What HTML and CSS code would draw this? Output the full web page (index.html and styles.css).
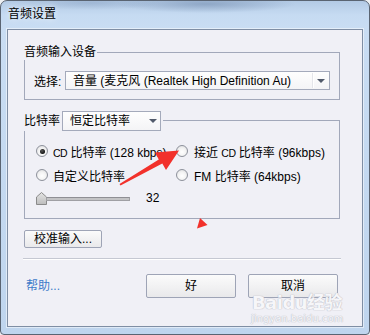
FILE: index.html
```html
<!DOCTYPE html>
<html lang="zh-CN">
<head>
<meta charset="utf-8">
<title>音频设置</title>
<link rel="stylesheet" href="styles.css">
</head>
<body>
<div class="window">
  <div class="titlebar">音频设置</div>
  <div class="client">
    <div class="group g1">
      <div class="group-title">音频输入设备</div>
      <div class="select-row">
        <span class="lbl">选择:</span>
        <div class="combo wide">
          <span class="combo-text">音量 (麦克风 (Realtek High Definition Au)</span>
          <span class="combo-sep"></span>
          <span class="arrow"></span>
        </div>
      </div>
    </div>

    <div class="group g2">
      <div class="group-title g2-title">
        <span class="g2-label">比特率</span>
        <div class="combo small">
          <span class="combo-text">恒定比特率</span>
          <span class="arrow"></span>
        </div>
      </div>
      <div class="radios">
        <div class="radio"><i class="dot checked"></i><span><span class="cd">CD</span> 比特率 (128 kbps)</span></div>
        <div class="radio"><i class="dot"></i><span>接近 <span class="cd">CD</span> 比特率 (96kbps)</span></div>
        <div class="radio"><i class="dot"></i><span>自定义比特率</span></div>
        <div class="radio"><i class="dot"></i><span>FM 比特率 (64kbps)</span></div>
      </div>
      <div class="slider-row">
        <div class="slider">
          <svg class="thumb" width="11" height="13" viewBox="0 0 11 13">
            <defs>
              <linearGradient id="tg" x1="0" y1="0" x2="0" y2="1">
                <stop offset="0" stop-color="#e4e4e4"/>
                <stop offset="1" stop-color="#bdbdbd"/>
              </linearGradient>
            </defs>
            <polygon points="0.5,12.5 0.5,5 5.5,0.5 10.5,5 10.5,12.5" fill="url(#tg)" stroke="#8a8a8a"/>
          </svg>
          <div class="track"></div>
        </div>
        <span class="val">32</span>
      </div>
    </div>

    <button class="btn calib">校准输入...</button>
    <div class="separator"></div>
    <div class="footer">
      <a class="help">帮助...</a>
      <div class="actions">
        <button class="btn big">好</button>
        <button class="btn big">取消</button>
      </div>
    </div>
  </div>

  <svg class="annot" width="370" height="335" viewBox="0 0 370 335">
    <polygon points="119.5,184 158.8,159.5 155,152.5 179,150.5 166,170 162.3,163.6 120.5,185.6" fill="#f2312b"/>
    <polygon points="200,218 197,228.5 207.5,225" fill="#f2312b"/>
  </svg>
  <div class="watermark">
    <div class="wm-big">Baidu经验</div>
    <div class="wm-small">jingyan.baidu.com</div>
  </div>
</div>
</body>
</html>
```
FILE: styles.css
```css
* { box-sizing: border-box; }
html, body { margin: 0; padding: 0; }
body {
  width: 370px;
  height: 335px;
  overflow: hidden;
  background: #eef0f3;
  font-family: "Liberation Sans", "Noto Sans CJK SC", sans-serif;
  font-size: 12px;
  color: #000;
}
.window {
  position: relative;
  width: 370px;
  height: 335px;
  border: 1px solid #5a6472;
  border-radius: 7px 7px 4px 4px;
  padding: 0 6px 7px 6px;
  display: flex;
  flex-direction: column;
  background:
    radial-gradient(ellipse 90px 9px at 205px 3px, rgba(110,135,170,0.55), rgba(110,135,170,0) 100%),
    radial-gradient(ellipse 70px 7px at 90px 2px, rgba(120,145,180,0.35), rgba(120,145,180,0) 100%),
    linear-gradient(to bottom, #b3cae5 0, #c6dbf2 14px, #c9ddf3 28px, #bfd5ee 100%);
}
.titlebar {
  height: 28px;
  line-height: 27px;
  padding-left: 1px;
  font-size: 12px;
  color: #000;
  text-shadow: 0 0 6px rgba(255,255,255,0.9);
}
.client {
  height: 298px;
  border: 1px solid #7f8ea4;
  box-shadow: 0 0 0 1px rgba(255,255,255,0.5);
  background: #f0f0f6;
  padding: 22px 22px 0 16px;
  display: flex;
  flex-direction: column;
  align-items: flex-start;
}
.group {
  width: 316px;
  border: 1px solid #a2a8ba;
  display: flex;
  flex-direction: column;
  align-items: flex-start;
}
.group-title {
  background: #f0f0f6;
  line-height: 16px;
  margin: -9px 0 0 -1px;
  padding-right: 1px;
}
.g1 { padding-bottom: 9px; }
.select-row {
  margin-top: 11px;
  padding-left: 9px;
  display: flex;
  align-items: center;
}
.lbl { width: 31px; flex: none; white-space: nowrap; }
.combo {
  flex: none;
  display: flex;
  align-items: center;
  border: 1px solid #a4aabb;
  background: linear-gradient(to bottom, #fefefe, #f4f4f6);
  padding-left: 7px;
  white-space: nowrap;
  overflow: hidden;
}
.wide { width: 265px; height: 19px; }
.small { width: 99px; height: 20px; }
.combo-text { line-height: 16px; flex: none; }
.combo-sep {
  margin-left: auto;
  width: 2px;
  height: 15px;
  border-left: 1px solid #e4e5ea;
  border-right: 1px solid #ffffff;
  margin-right: 3px;
}
.arrow {
  margin-left: auto;
  flex: none;
  width: 0;
  height: 0;
  border-left: 4px solid transparent;
  border-right: 4px solid transparent;
  border-top: 4px solid #515a6b;
}
.wide .arrow { margin-left: 0; margin-right: 4px; }
.small .arrow { margin-right: 3px; }

.g2 { margin-top: 20px; padding-bottom: 13px; }
.g2-title {
  display: flex;
  align-items: center;
  height: 20px;
  margin-top: -10px;
  padding-right: 2px;
}
.g2-label { width: 38px; flex: none; line-height: 16px; }
.radios {
  margin-top: 12px;
  padding-left: 11px;
  display: grid;
  grid-template-columns: 140px auto;
  row-gap: 8px;
}
.radio {
  display: flex;
  align-items: center;
  gap: 5px;
  height: 16px;
  white-space: nowrap;
}
.radio + .radio + .radio, .radio:nth-child(2), .radio:nth-child(4) { }
.radio:nth-child(2n) { gap: 6px; }
.cd { font-size: 10.5px; letter-spacing: -0.5px; }
.dot {
  display: flex;
  align-items: center;
  justify-content: center;
  width: 12px;
  height: 12px;
  border-radius: 50%;
  border: 1px solid #8d919b;
  background: radial-gradient(circle at 50% 60%, #ffffff 0, #f4f4f4 45%, #d9d9dc 100%);
}
.dot.checked::after {
  content: "";
  width: 5px;
  height: 5px;
  border-radius: 50%;
  background: radial-gradient(circle at 40% 35%, #555 0, #111 70%);
}
.slider-row {
  margin-top: 8px;
  padding-left: 11px;
  display: flex;
  align-items: center;
  height: 14px;
}
.slider {
  display: flex;
  align-items: center;
  width: 94px;
}
.thumb { display: block; flex: none; }
.track {
  width: 84px;
  height: 4px;
  margin-left: -1px;
  margin-top: 1px;
  background: #c3c3c5;
  border: 1px solid #a0a0a4;
  border-top-color: #8f8f94;
}
.val { margin-left: 16px; line-height: 14px; }

.btn {
  font-family: "Liberation Sans", "Noto Sans CJK SC", sans-serif;
  font-size: 12px;
  color: #000;
  border: 1px solid #9ea4b6;
  border-radius: 2px;
  background: linear-gradient(to bottom, #fbfbfb 0, #f2f2f3 50%, #e9e9eb 100%);
  padding: 0;
  margin: 0;
  line-height: 16px;
}
.calib {
  margin-top: 11px;
  width: 78px;
  height: 18px;
}
.separator {
  margin-top: 10px;
  margin-left: -1px;
  width: 318px;
  height: 2px;
  border-top: 1px solid #c5c8d2;
  border-bottom: 1px solid #ffffff;
}
.footer {
  margin-top: 14px;
  width: 316px;
  height: 24px;
  padding: 0 2px 0 2px;
  display: flex;
  align-items: center;
  justify-content: space-between;
}
.help { color: #3c7bc9; line-height: 16px; }
.actions { display: flex; gap: 12px; }
.big { width: 90px; height: 24px; }

.annot {
  position: absolute;
  left: -1px;
  top: -1px;
  pointer-events: none;
}
.watermark {
  position: absolute;
  left: 250px;
  top: 291px;
  width: 92px;
  text-align: center;
  pointer-events: none;
  color: #f6f6f9;
  font-family: "DejaVu Sans", "Noto Sans CJK SC", sans-serif;
  text-shadow: 0 0 1px #b9bac4, 0 0 1px #b9bac4;
}
.wm-big { font-size: 18px; font-weight: bold; line-height: 22px; letter-spacing: -0.5px; }
.wm-small { font-size: 10px; line-height: 12px; margin-top: -1px; }
```
